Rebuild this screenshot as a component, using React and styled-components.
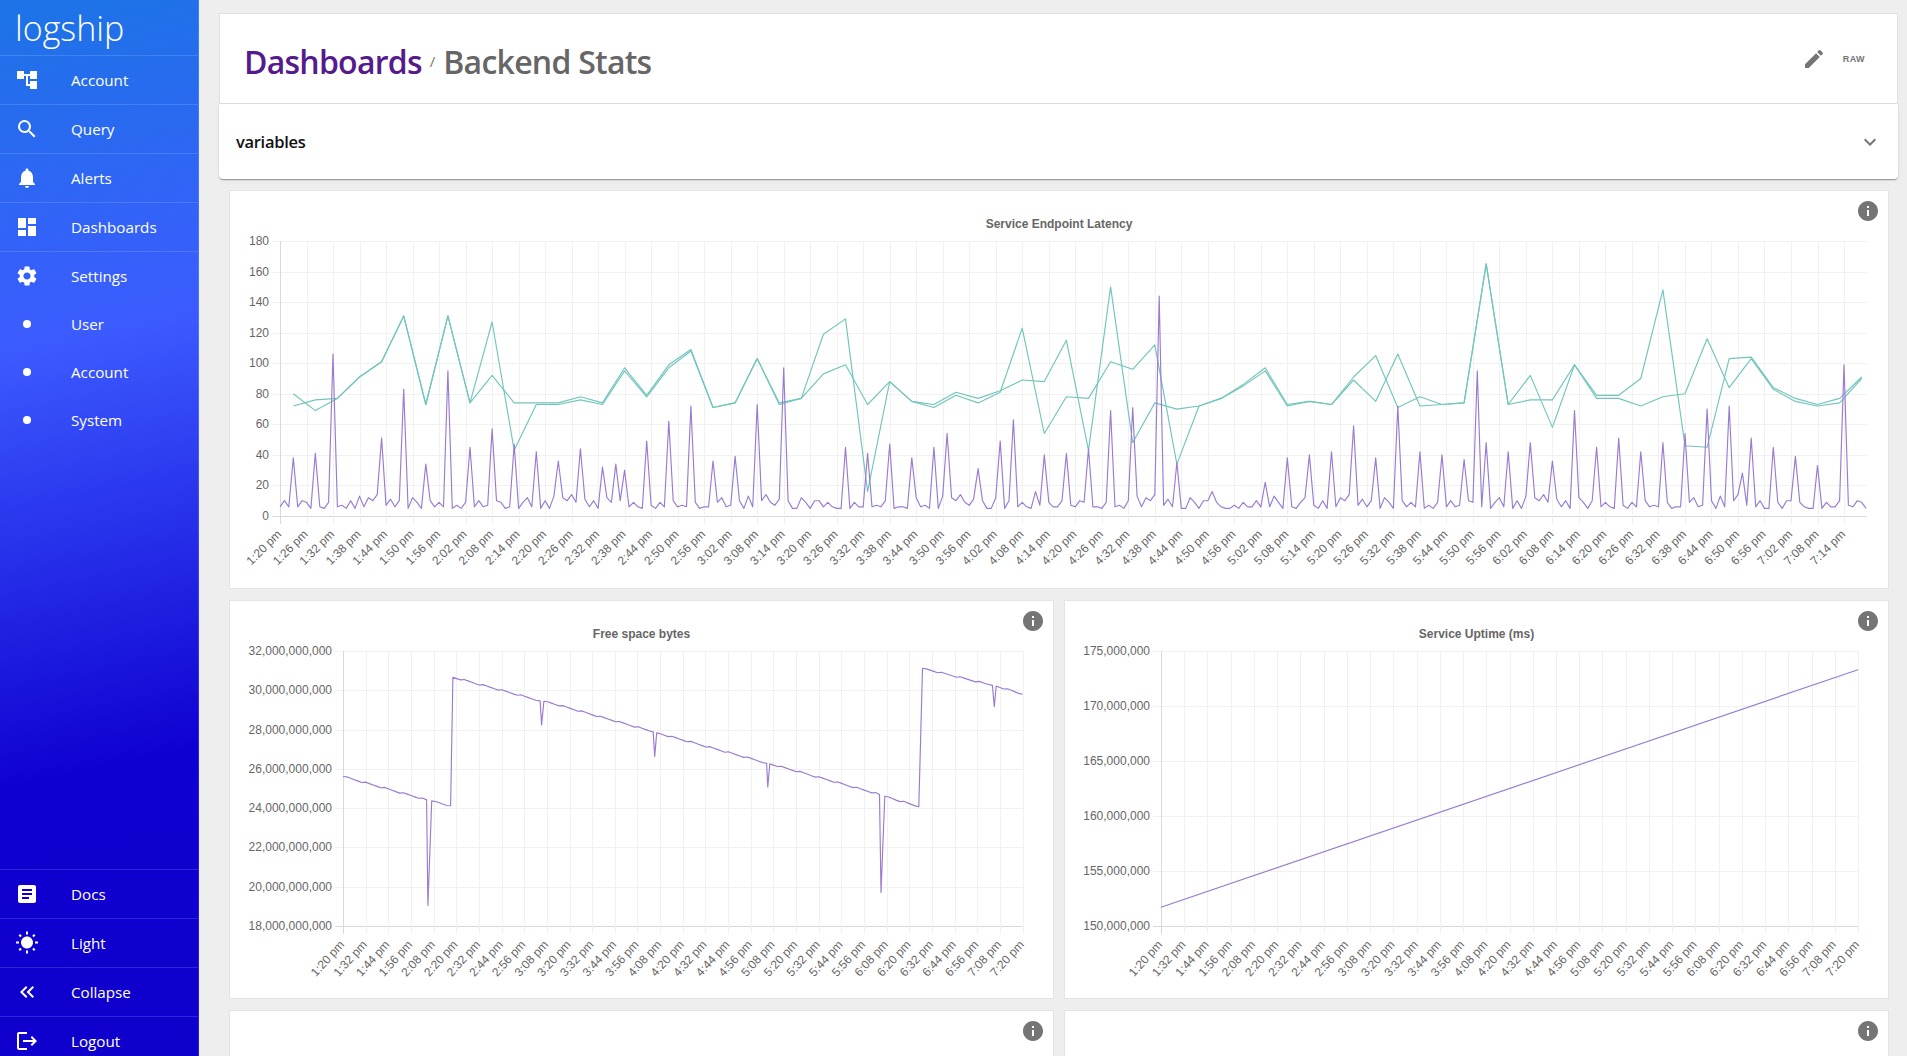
import React from "react";
import styled, { createGlobalStyle } from "styled-components";
import {
  MdAccountTree,
  MdSearch,
  MdNotifications,
  MdDashboard,
  MdSettings,
  MdFiberManualRecord,
  MdArticle,
  MdWbSunny,
  MdKeyboardDoubleArrowLeft,
  MdLogout,
  MdEdit,
  MdExpandMore,
  MdInfo,
} from "react-icons/md";

const UI_FONT = `"Open Sans", "Noto Sans", sans-serif`;
const CHART_FONT = `"Liberation Sans", Arial, sans-serif`;

const GlobalStyle = createGlobalStyle`
  html, body, #root {
    height: 100%;
    margin: 0;
  }
  body {
    overflow: hidden;
    background: #eeeeee;
    font-family: ${UI_FONT};
  }
`;

const Page = styled.div`
  display: flex;
  height: 100vh;
  overflow: hidden;
`;

const Sidebar = styled.nav`
  flex: 0 0 199px;
  box-sizing: border-box;
  display: flex;
  flex-direction: column;
  justify-content: space-between;
  overflow: hidden;
  color: #fff;
  border-right: 1px solid rgba(255, 255, 255, 0.12);
  background: linear-gradient(168deg, #1c74e6 0%, #3c5bff 32%, #0f00d2 72%, #0f00cc 100%);
`;

const Logo = styled.div`
  height: 55px;
  box-sizing: border-box;
  padding-left: 15px;
  font-size: 34px;
  font-weight: 300;
  line-height: 57px;
`;

const NavRow = styled.div`
  height: ${({ $sub }) => ($sub ? 48 : 49)}px;
  box-sizing: border-box;
  display: flex;
  align-items: center;
  padding-left: 15px;
  font-size: 15.2px;
  border-top: ${({ $plain }) => ($plain ? "none" : "1px solid rgba(255, 255, 255, 0.14)")};
  svg {
    flex: 0 0 24px;
    margin-right: 32px;
  }
`;

const NavFooter = styled.div`
  margin-bottom: -9px;
`;

const Main = styled.main`
  flex: 1;
  min-width: 0;
  padding: 13px 9px 0 20px;
`;

const TitleBar = styled.header`
  height: 91px;
  box-sizing: border-box;
  display: flex;
  align-items: center;
  padding: 5px 32px 0 24px;
  background: #fff;
  border: 1px solid #e0e0e0;
`;

const Crumb = styled.a`
  font-size: 32px;
  font-weight: 600;
  letter-spacing: -0.75px;
  color: ${({ $current }) => ($current ? "#666666" : "#551a8b")};
`;

const CrumbSlash = styled.span`
  margin: 0 8px;
  font-size: 15px;
  color: #777;
`;

const TitleActions = styled.div`
  margin-left: auto;
  display: flex;
  align-items: center;
  gap: 17px;
  margin-top: -5px;
  color: #757575;
`;

const RawLabel = styled.span`
  font-family: ${CHART_FONT};
  font-size: 9px;
  font-weight: 700;
  letter-spacing: 0.4px;
`;

const Variables = styled.section`
  height: 75px;
  box-sizing: border-box;
  display: flex;
  align-items: center;
  justify-content: space-between;
  padding: 0 16px 0 17px;
  background: #fff;
  border-radius: 0 0 4px 4px;
  box-shadow: 0 2px 1px -1px rgba(0, 0, 0, 0.2), 0 1px 1px 0 rgba(0, 0, 0, 0.14),
    0 1px 3px 0 rgba(0, 0, 0, 0.12);
  font-size: 16.5px;
  font-weight: 600;
  letter-spacing: -0.3px;
  color: #111;
  svg {
    color: #757575;
  }
`;

const ChartGrid = styled.div`
  display: grid;
  grid-template-columns: 825px 825px;
  column-gap: 10px;
  row-gap: 11px;
  margin: 11px 0 0 10px;
`;

const Card = styled.article`
  position: relative;
  grid-column: ${({ $wide }) => ($wide ? "1 / -1" : "auto")};
  height: 399px;
  box-sizing: border-box;
  background: #fff;
  border: 1px solid #e4e4e4;
`;

const InfoBadge = styled(MdInfo)`
  position: absolute;
  top: 8px;
  right: 8px;
  color: #757575;
`;

const ChartSvg = styled.svg`
  display: block;
  font-family: ${CHART_FONT};
  font-size: 12px;
  fill: #666;
`;

const ChartTitle = styled.text`
  font-weight: 700;
  text-anchor: middle;
`;

// service latency samples, one teal point every 5 minutes starting at minute 3
const latencyA = [
  80, 69, 77, 91, 101, 131, 73, 131, 74, 127, 43, 73, 73, 76, 73, 95, 78, 97, 108, 71, 74, 103, 73, 77, 119, 129, 16,
  88, 75, 71, 79, 74, 81, 123, 54, 78, 77, 101, 96, 112, 34, 72, 77, 86, 97, 73, 75, 73, 91, 105,
  71, 78, 73, 74, 165, 73, 76, 76, 99, 79, 79, 90, 148, 46, 45, 103, 104, 84, 77, 73, 77, 91,
];
const latencyB = [
  72, 76, 77, 91, 101, 131, 73, 131, 74, 92, 74, 74, 74, 78, 74, 97, 79, 99, 109, 71, 74, 103, 74, 77, 93, 99, 73,
  88, 75, 73, 81, 77, 82, 89, 88, 115, 43, 150, 48, 74, 70, 72, 77, 85, 95, 72, 75, 73, 89, 75,
  106, 72, 73, 74, 165, 73, 92, 58, 99, 77, 77, 72, 78, 80, 116, 84, 103, 83, 75, 72, 74, 90,
];

// minute -> value for the tall peaks in the request series
const peaks = {
  3: 38, 8: 41, 12: 106, 23: 51, 28: 83, 33: 34, 38: 95, 43: 45, 48: 57, 53: 47, 58: 42, 63: 36, 68: 44,
  73: 32, 76: 34, 78: 30, 83: 49, 88: 62, 93: 72, 98: 36, 103: 39, 108: 73, 114: 97, 128: 45, 133: 41,
  138: 47, 143: 38, 148: 45, 151: 54, 158: 31, 163: 49, 166: 63, 171: 16, 173: 40, 178: 41, 183: 44,
  188: 69, 193: 71, 199: 144, 203: 35, 211: 16, 223: 22, 225: 13, 228: 38, 233: 40, 238: 42, 243: 59,
  248: 38, 253: 72, 258: 42, 263: 40, 268: 37, 271: 95, 273: 48, 278: 42, 283: 48, 288: 36, 293: 69,
  298: 45, 303: 51, 308: 42, 313: 48, 318: 54, 323: 70, 328: 72, 331: 28, 333: 51, 338: 45, 343: 39,
  348: 33, 354: 99,
};
const lowNoise = [
  6, 10, 6, 7, 6, 10, 9, 5, 6, 6, 5, 9, 12, 6, 7, 5, 10, 5, 13, 6, 12, 10, 14, 9, 7, 11, 6, 10, 5, 5, 12, 9, 5,
  10, 10, 6, 9, 6, 5, 5, 7, 5, 9, 6,
];

const tealA = latencyA.map((v, i) => [3 + i * 5, v]);
const tealB = latencyB.map((v, i) => [3 + i * 5, v]);
const purple = Array.from({ length: 360 }, (_, m) => [m, peaks[m] ?? lowNoise[m % lowNoise.length]]);

const freeSpaceKnots = [
  [0, 25.61], [44.3, 24.42], [45, 19.05], [47, 24.37], [57, 24.12], [58.2, 30.66], [104.4, 29.46], [105.2, 28.24],
  [106.4, 29.44], [164.3, 27.88], [165.1, 26.63], [166.2, 27.83], [224.4, 26.29], [225, 25.08], [226.1, 26.25],
  [284.2, 24.69], [285, 19.71], [287, 24.61], [305, 24.07], [307, 31.12], [344, 30.25], [345, 29.17], [346, 30.22],
  [360, 29.8],
];

// the disk numbers step a little instead of falling smoothly
function addSteps(knots) {
  const out = [];
  knots.forEach(([m, v], i) => {
    out.push([m, v]);
    const next = knots[i + 1];
    if (!next || next[0] - m < 4) return;
    for (let t = m + 2; t < next[0] - 1; t += 2) {
      const wobble = (((t * 7) % 5) - 2) * 0.018;
      out.push([t, v + ((next[1] - v) * (t - m)) / (next[0] - m) + wobble]);
    }
  });
  return out;
}

const freeSpace = addSteps(freeSpaceKnots);
const uptime = [[0, 151.7], [360, 173.3]];

function timeLabel(minutes) {
  const total = 80 + minutes;
  const h = Math.floor(total / 60);
  const m = total % 60;
  return `${h}:${String(m).padStart(2, "0")} pm`;
}

function LineChart({ width, height, title, plot, domain, yTicks, xStep, xCount, angle, series }) {
  const { left, top, right, bottom } = plot;
  const xAt = (m) => left + (m / domain) * (right - left);
  const yMin = yTicks[0].value;
  const yMax = yTicks[yTicks.length - 1].value;
  const yAt = (v) => bottom - ((v - yMin) / (yMax - yMin)) * (bottom - top);
  const crisp = (n) => Math.round(n) + 0.5;
  const xTicks = Array.from({ length: xCount }, (_, i) => i * xStep);

  return (
    <ChartSvg width={width} height={height} viewBox={`0 0 ${width} ${height}`}>
      <ChartTitle x={width / 2} y={37}>{title}</ChartTitle>

      {yTicks.map((t, i) => (
        <g key={t.value}>
          <line
            x1={left - 8} x2={right}
            y1={crisp(yAt(t.value))} y2={crisp(yAt(t.value))}
            stroke={i === 0 ? "#d9d9d9" : "#f1f1f1"}
          />
          <text x={left - 11} y={yAt(t.value) + 4} textAnchor="end">{t.label}</text>
        </g>
      ))}

      {xTicks.map((m, i) => (
        <g key={m}>
          <line
            x1={crisp(xAt(m))} x2={crisp(xAt(m))}
            y1={top} y2={bottom + 8}
            stroke={i === 0 ? "#d9d9d9" : "#f1f1f1"}
          />
          <text
            x={xAt(m) + 2} y={bottom + 19}
            textAnchor="end"
            transform={`rotate(${angle} ${xAt(m) + 2} ${bottom + 19})`}
          >
            {timeLabel(m)}
          </text>
        </g>
      ))}

      {series.map((s) => (
        <polyline
          key={s.name}
          fill="none"
          stroke={s.color}
          strokeWidth={1.15}
          strokeLinejoin="round"
          points={s.points.map(([m, v]) => `${xAt(m).toFixed(1)},${yAt(v).toFixed(1)}`).join(" ")}
        />
      ))}
    </ChartSvg>
  );
}

const latencyTicks = Array.from({ length: 10 }, (_, i) => ({ value: i * 20, label: String(i * 20) }));
const freeTicks = [18, 20, 22, 24, 26, 28, 30, 32].map((v) => ({ value: v, label: `${v},000,000,000` }));
const uptimeTicks = [150, 155, 160, 165, 170, 175].map((v) => ({ value: v, label: `${v},000,000` }));

const PURPLE = "#9a7bd0";
const TEAL = "#71c5bd";

const topNav = [
  { Icon: MdAccountTree, label: "Account" },
  { Icon: MdSearch, label: "Query" },
  { Icon: MdNotifications, label: "Alerts" },
  { Icon: MdDashboard, label: "Dashboards" },
  { Icon: MdSettings, label: "Settings" },
];
const subNav = ["User", "Account", "System"];
const bottomNav = [
  { Icon: MdArticle, label: "Docs" },
  { Icon: MdWbSunny, label: "Light" },
  { Icon: MdKeyboardDoubleArrowLeft, label: "Collapse" },
  { Icon: MdLogout, label: "Logout" },
];

export default function App() {
  return (
    <Page>
      <GlobalStyle />
      <Sidebar>
        <div>
          <Logo>logship</Logo>
          {topNav.map(({ Icon, label }) => (
            <NavRow key={label}>
              <Icon size={24} />
              {label}
            </NavRow>
          ))}
          {subNav.map((label) => (
            <NavRow key={label} $sub $plain>
              <MdFiberManualRecord size={24} style={{ transform: "scale(0.5)" }} />
              {label}
            </NavRow>
          ))}
        </div>
        <NavFooter>
          {bottomNav.map(({ Icon, label }) => (
            <NavRow key={label}>
              <Icon size={24} />
              {label}
            </NavRow>
          ))}
        </NavFooter>
      </Sidebar>

      <Main>
        <TitleBar>
          <Crumb>Dashboards</Crumb>
          <CrumbSlash>/</CrumbSlash>
          <Crumb $current>Backend Stats</Crumb>
          <TitleActions>
            <MdEdit size={24} />
            <RawLabel>RAW</RawLabel>
          </TitleActions>
        </TitleBar>

        <Variables>
          variables
          <MdExpandMore size={24} />
        </Variables>

        <ChartGrid>
          <Card $wide>
            <InfoBadge size={24} />
            <LineChart
              width={1658}
              height={397}
              title="Service Endpoint Latency"
              plot={{ left: 50, top: 50, right: 1637, bottom: 325 }}
              domain={359.2}
              yTicks={latencyTicks}
              xStep={6}
              xCount={60}
              angle={-45}
              series={[
                { name: "a", color: TEAL, points: tealA },
                { name: "b", color: TEAL, points: tealB },
                { name: "requests", color: PURPLE, points: purple },
              ]}
            />
          </Card>

          <Card>
            <InfoBadge size={24} />
            <LineChart
              width={823}
              height={397}
              title="Free space bytes"
              plot={{ left: 113, top: 50, right: 792.6, bottom: 325 }}
              domain={360}
              yTicks={freeTicks}
              xStep={12}
              xCount={31}
              angle={-48}
              series={[{ name: "free", color: PURPLE, points: freeSpace }]}
            />
          </Card>

          <Card>
            <InfoBadge size={24} />
            <LineChart
              width={823}
              height={397}
              title="Service Uptime (ms)"
              plot={{ left: 96, top: 50, right: 793, bottom: 325 }}
              domain={360}
              yTicks={uptimeTicks}
              xStep={12}
              xCount={31}
              angle={-48}
              series={[{ name: "uptime", color: PURPLE, points: uptime }]}
            />
          </Card>

          <Card>
            <InfoBadge size={24} />
          </Card>
          <Card>
            <InfoBadge size={24} />
          </Card>
        </ChartGrid>
      </Main>
    </Page>
  );
}
